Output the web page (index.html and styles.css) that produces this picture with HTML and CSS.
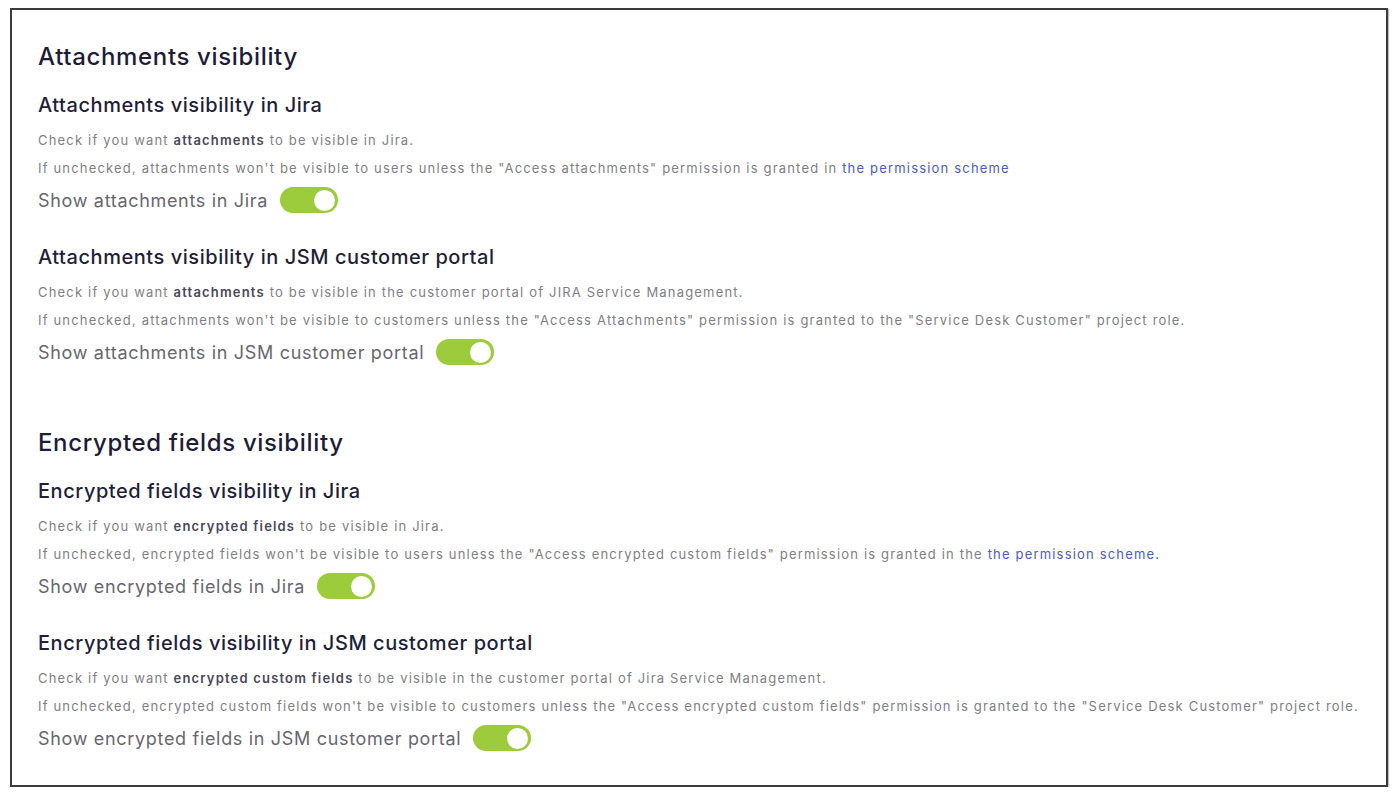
FILE: index.html
```html
<!DOCTYPE html>
<html lang="en">
<head>
<meta charset="utf-8">
<title>Visibility settings</title>
<link rel="stylesheet" href="styles.css">
</head>
<body>
<div class="frame">
  <section class="group">
    <h1 class="group-title">Attachments visibility</h1>
    <div class="setting">
      <h2 class="setting-title">Attachments visibility in Jira</h2>
      <p class="desc">Check if you want <b>attachments</b> to be visible in Jira.</p>
      <p class="desc">If unchecked, attachments won't be visible to users unless the "Access attachments" permission is granted in <a href="#">the permission scheme</a></p>
      <div class="toggle-row"><span class="toggle-label">Show attachments in Jira</span><span class="toggle"><span class="knob"></span></span></div>
    </div>
    <div class="setting">
      <h2 class="setting-title">Attachments visibility in JSM customer portal</h2>
      <p class="desc">Check if you want <b>attachments</b> to be visible in the customer portal of JIRA Service Management.</p>
      <p class="desc">If unchecked, attachments won't be visible to customers unless the "Access Attachments" permission is granted to the "Service Desk Customer" project role.</p>
      <div class="toggle-row"><span class="toggle-label">Show attachments in JSM customer portal</span><span class="toggle"><span class="knob"></span></span></div>
    </div>
  </section>
  <section class="group">
    <h1 class="group-title">Encrypted fields visibility</h1>
    <div class="setting">
      <h2 class="setting-title">Encrypted fields visibility in Jira</h2>
      <p class="desc">Check if you want <b>encrypted fields</b> to be visible in Jira.</p>
      <p class="desc">If unchecked, encrypted fields won't be visible to users unless the "Access encrypted custom fields" permission is granted in the <a href="#">the permission scheme.</a></p>
      <div class="toggle-row"><span class="toggle-label">Show encrypted fields in Jira</span><span class="toggle"><span class="knob"></span></span></div>
    </div>
    <div class="setting">
      <h2 class="setting-title">Encrypted fields visibility in JSM customer portal</h2>
      <p class="desc">Check if you want <b>encrypted custom fields</b> to be visible in the customer portal of Jira Service Management.</p>
      <p class="desc">If unchecked, encrypted custom fields won't be visible to customers unless the "Access encrypted custom fields" permission is granted to the "Service Desk Customer" project role.</p>
      <div class="toggle-row"><span class="toggle-label">Show encrypted fields in JSM customer portal</span><span class="toggle"><span class="knob"></span></span></div>
    </div>
  </section>
</div>
</body>
</html>
```
FILE: styles.css
```css
html, body {
  margin: 0;
  padding: 0;
  background: #ffffff;
}
body {
  padding: 8px 12px 0 10px;
  font-family: Inter, "Noto Sans", "Liberation Sans", sans-serif;
}
.frame {
  border: 2px solid #3c3c3c;
  height: 779px;
  box-sizing: border-box;
  padding: 32px 0 0 26px;
  box-shadow: 1px 1px 1px rgba(0,0,0,0.25);
}
.group + .group {
  margin-top: 63px;
}
.group-title {
  margin: 0;
  font-size: 24px;
  line-height: 30px;
  font-weight: 500;
  color: #1d1d3a;
  letter-spacing: 0.65px;
}
.setting {
  margin-top: 20px;
}
.setting + .setting {
  margin-top: 31px;
}
.setting-title {
  margin: 0;
  font-size: 20px;
  line-height: 26px;
  font-weight: 500;
  color: #1f1f3a;
  letter-spacing: 0.55px;
}
.desc {
  margin: 0;
  font-size: 13px;
  line-height: 20px;
  color: #808084;
  letter-spacing: 1.18px;
}
.setting-title + .desc {
  margin-top: 12px;
}
.desc + .desc {
  margin-top: 8px;
}
.desc b {
  color: #48485a;
  font-weight: 600;
}
.desc a {
  color: #4a5cc8;
  text-decoration: none;
}
.toggle-row {
  margin-top: 9px;
  display: flex;
  align-items: center;
  gap: 12px;
  height: 26px;
}
.toggle-label {
  font-size: 18px;
  color: #67676f;
  letter-spacing: 0.68px;
}
.toggle {
  width: 58px;
  height: 26px;
  border-radius: 13px;
  background: #9ccb3b;
  display: flex;
  align-items: center;
  justify-content: flex-end;
  padding: 0 3px;
  box-sizing: border-box;
}
.knob {
  width: 21px;
  height: 21px;
  border-radius: 50%;
  background: #ffffff;
}
```
